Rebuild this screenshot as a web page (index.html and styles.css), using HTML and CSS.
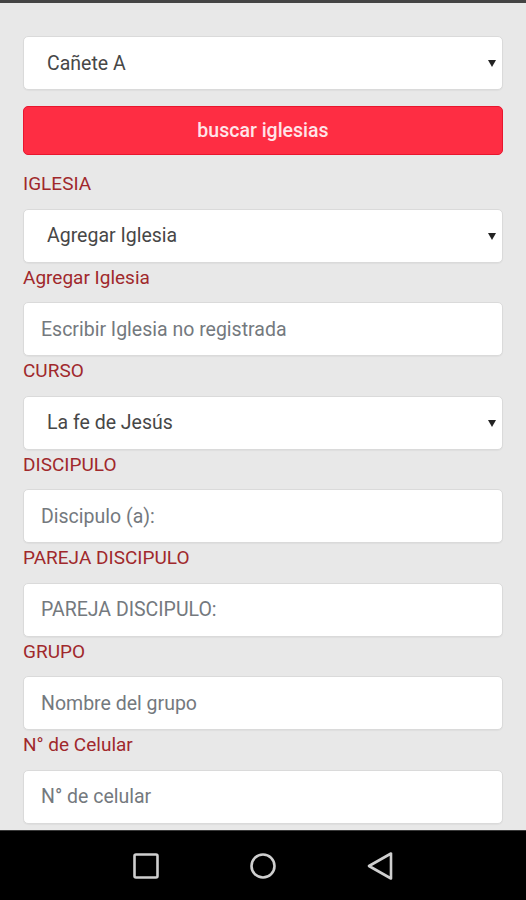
FILE: index.html
```html
<!DOCTYPE html>
<html>
<head>
  <title>Registro de Discipulado</title>
  <meta charset="utf-8">
  <link rel="stylesheet" href="styles.css">
</head>
<body>
  <div class="topbar"></div>

  <div class="screen">
    <div class="select-wrap">
      <select class="field field-select">
        <option>Cañete A</option>
      </select>
    </div>
    <button class="btn-buscar">buscar iglesias</button>

    <label class="lbl">IGLESIA</label>
    <div class="select-wrap">
      <select class="field field-select">
        <option>Agregar Iglesia</option>
      </select>
    </div>

    <label class="lbl">Agregar Iglesia</label>
    <input class="field" type="text" placeholder="Escribir Iglesia no registrada">

    <label class="lbl">CURSO</label>
    <div class="select-wrap">
      <select class="field field-select">
        <option>La fe de Jesús</option>
      </select>
    </div>

    <label class="lbl">DISCIPULO</label>
    <input class="field" type="text" placeholder="Discipulo (a):">

    <label class="lbl">PAREJA DISCIPULO</label>
    <input class="field" type="text" placeholder="PAREJA DISCIPULO:">

    <label class="lbl">GRUPO</label>
    <input class="field" type="text" placeholder="Nombre del grupo">

    <label class="lbl">N° de Celular</label>
    <input class="field" type="text" placeholder="N° de celular">
  </div>

  <div class="navbar">
    <svg width="28" height="28" viewBox="0 0 28 28">
      <rect x="2.5" y="2.5" width="23" height="23" rx="1.5" fill="none" stroke="#cfcfcf" stroke-width="2.6"/>
    </svg>
    <svg width="28" height="28" viewBox="0 0 28 28">
      <circle cx="14" cy="14" r="11.5" fill="none" stroke="#cfcfcf" stroke-width="2.6"/>
    </svg>
    <svg width="28" height="28" viewBox="0 0 28 28">
      <path d="M25 1.5 L25 26.5 L3 14 Z" fill="none" stroke="#cfcfcf" stroke-width="2.6" stroke-linejoin="round"/>
    </svg>
  </div>
</body>
</html>
```

FILE: styles.css
```css
html, body {
  margin: 0;
  padding: 0;
}

body {
  font-family: Roboto, "Noto Sans", Arial, sans-serif;
  background-color: #e8e8e8;
  height: 900px;
  display: flex;
  flex-direction: column;
  overflow: hidden;
}

.topbar {
  height: 3px;
  background-color: #444;
  flex: none;
}

.screen {
  flex: 1;
  overflow: hidden;
  padding: 33px 23px 0 23px;
  display: flex;
  flex-direction: column;
}

.field {
  box-sizing: border-box;
  width: 100%;
  height: 54px;
  margin: 0;
  flex: none;
  background-color: #fff;
  border: 1px solid #dadada;
  border-radius: 5px;
  box-shadow: 0 1px 1px rgba(0, 0, 0, 0.04);
  font-family: Roboto, "Noto Sans", Arial, sans-serif;
  font-size: 19.5px;
  color: #4a4a4a;
  padding: 0 17px;
  outline: none;
}

.field::placeholder {
  color: #74797e;
}

.select-wrap {
  position: relative;
  flex: none;
}

.field-select {
  appearance: none;
  -webkit-appearance: none;
  padding-left: 23px;
  color: #474747;
}

/* little dropdown arrow */
.select-wrap::after {
  content: "";
  position: absolute;
  right: 7px;
  top: 24px;
  border-left: 4px solid transparent;
  border-right: 4px solid transparent;
  border-top: 7px solid #222;
  pointer-events: none;
}

.btn-buscar {
  flex: none;
  height: 49px;
  margin: 16px 0 14px 0;
  background-color: #fe2d43;
  border: 1px solid #e8162e;
  border-radius: 5px;
  color: #ffe4e8;
  font-family: Roboto, "Noto Sans", Arial, sans-serif;
  font-size: 19.5px;
  font-weight: 500;
  cursor: pointer;
}

.lbl {
  display: block;
  flex: none;
  line-height: 24px;
  margin: 3px 0 12.5px 0;
  font-size: 19px;
  color: #a0282c;
}

.navbar {
  flex: none;
  height: 70px;
  background-color: #000;
  border-top: 1px solid #3a3a3a;
  box-sizing: border-box;
  display: flex;
  align-items: center;
  justify-content: center;
  gap: 89px;
}
```
